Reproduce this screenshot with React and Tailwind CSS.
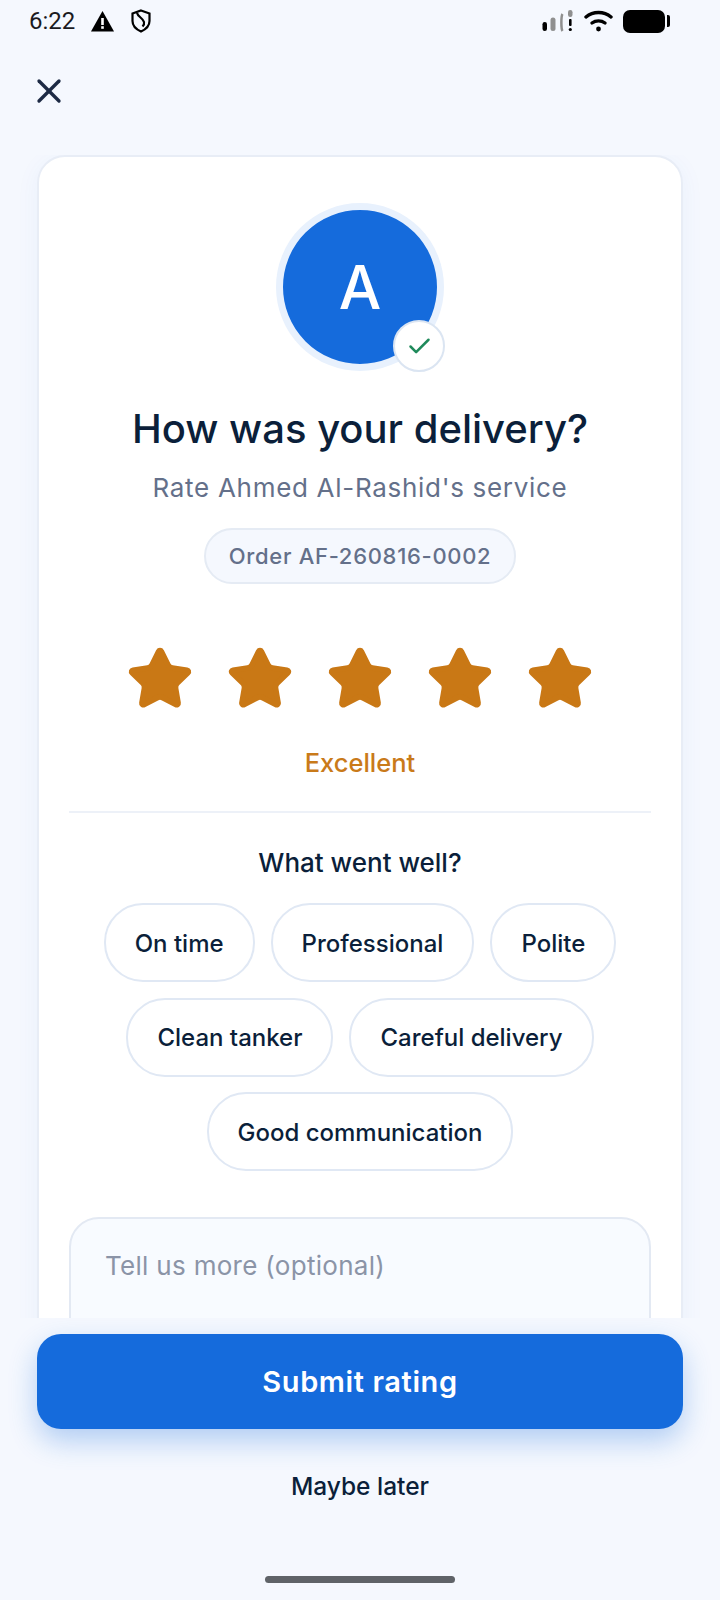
import { X, Check, Star } from 'lucide-react';

const chipRows = [
    ['On time', 'Professional', 'Polite'],
    ['Clean tanker', 'Careful delivery'],
    ['Good communication'],
];

function StatusBar() {
    return (
        <div className="flex h-[42px] items-center justify-between pl-[29px] pr-[50px]">
            <div className="flex items-center gap-[16px]">
                <span className="font-['Roboto',sans-serif] text-[24px] leading-none text-[#1b1b1f]">6:22</span>
                <svg width="23" height="21" viewBox="0 0 23 21">
                    <path d="M11.500 0L23 20.500H0z" fill="#000" />
                    <rect x="10.200" y="7" width="2.600" height="7" fill="#fff" />
                    <rect x="10.200" y="15.200" width="2.600" height="2.600" fill="#fff" />
                </svg>
                <svg className="ml-[1px]" width="20" height="24" viewBox="0 0 20 24" fill="none" stroke="#000" strokeWidth="2.200">
                    <path d="M10 1.500l8.500 3v7.500c0 5-3.600 8.300-8.500 10.500C5.100 20.300 1.500 17 1.500 12V4.500z" />
                    <path d="M6 4c1 4 6 5 7 9 .4 1.700-.5 3.500-1.500 4.500" />
                </svg>
            </div>
            <div className="flex items-center gap-[10px]">
                <svg className="mr-[1px]" width="31" height="24" viewBox="0 0 31 24">
                    <rect x="0.500" y="13" width="4.500" height="9" rx="2.200" fill="#000" />
                    <rect x="8.500" y="8.500" width="5" height="13.500" rx="2.500" fill="#8f8f8f" />
                    <path d="M20.500 5c-1.500 2-1.500 15 0 17" stroke="#8f8f8f" strokeWidth="2.500" fill="none" />
                    <rect x="26" y="1" width="4.500" height="7" rx="2.200" fill="#8f8f8f" />
                    <rect x="27" y="10" width="2.600" height="7" rx="1" fill="#000" />
                    <circle cx="28.300" cy="20.500" r="1.600" fill="#000" />
                </svg>
                <svg width="29" height="24" viewBox="0 0 29 24" fill="none" stroke="#000" strokeWidth="3.400" strokeLinecap="round">
                    <path d="M2 8C9 2 20 2 27 8" />
                    <path d="M8 14c3.800-2.800 9.200-2.800 13 0" />
                    <circle cx="14.500" cy="20" r="1.400" fill="#000" strokeWidth="2" />
                </svg>
                <div className="flex items-center gap-[2px]">
                    <div className="h-[23px] w-[42px] rounded-[7px] bg-black" />
                    <div className="h-[12px] w-[3px] rounded-r-[2px] bg-black" />
                </div>
            </div>
        </div>
    );
}

export default function App() {
    return (
        <div className="flex h-[1600px] w-[720px] flex-col overflow-hidden bg-[#f5f8fe] font-['Inter',sans-serif]">
            <StatusBar />
            <div className="flex h-[113px] shrink-0 items-start pl-[29px] pt-[29px]">
                <X size={40} strokeWidth={2} color="#1d2a44" />
            </div>

            <div className="relative min-h-0 flex-1 overflow-hidden px-[37px]">
                <div className="flex h-[1300px] flex-col items-center rounded-[28px] border-2 border-[#e8edf6] bg-white px-[30px] pt-[46px] shadow-[0_4px_24px_rgba(21,105,220,0.05)]">
                    <div className="relative h-[168px] w-[168px] rounded-full border-[7px] border-[#e8f1fd] bg-[#156bdc]">
                        <div className="flex h-full items-center justify-center text-[60px] leading-none font-medium text-white">A</div>
                        <div className="absolute right-[-8px] bottom-[-8px] flex h-[52px] w-[52px] items-center justify-center rounded-full border-2 border-[#dbe5f2] bg-white">
                            <Check size={27} strokeWidth={2.200} color="#1f8a5b" />
                        </div>
                    </div>
                    <h1 className="mt-[34px] text-[40px] leading-[48px] font-medium text-[#0b1f3a]">How was your delivery?</h1>
                    <p className="mt-[19px] text-[26px] leading-[32px] tracking-[0.7px] text-[#64708a]">Rate Ahmed Al-Rashid's service</p>
                    <div className="mt-[24px] flex h-[56px] items-center rounded-full border-2 border-[#e5ebf4] bg-[#f5f8fe] px-[23px] text-[22px] font-medium tracking-[0.7px] text-[#64708a]">
                        Order AF-260816-0002
                    </div>
                    <div className="mt-[61px] flex gap-[32px]">
                        <Star size={68} fill="#c97815" color="#c97815" />
                        <Star size={68} fill="#c97815" color="#c97815" />
                        <Star size={68} fill="#c97815" color="#c97815" />
                        <Star size={68} fill="#c97815" color="#c97815" />
                        <Star size={68} fill="#c97815" color="#c97815" />
                    </div>
                    <p className="mt-[34px] text-[25.500px] leading-[32px] font-medium text-[#c97a1a]">Excellent</p>
                    <div className="mt-[32px] h-[2px] w-full bg-[#edf1f8]" />
                    <p className="mt-[34px] text-[26px] leading-[32px] font-medium text-[#0b1f3a]">What went well?</p>
                    <div className="mt-[24px] flex flex-col items-center gap-[15.500px]">
                        {chipRows.map((row) => (
                            <div key={row[0]} className="flex gap-[16px]">
                                {row.map((label) => (
                                    <div key={label} className="flex h-[79px] items-center rounded-[39px] border-2 border-[#e0e8f4] bg-white px-[29px] pt-[2px] text-[24px] font-[450] text-[#0b1f3a]">
                                        {label}
                                    </div>
                                ))}
                            </div>
                        ))}
                    </div>
                    <div className="mt-[46px] h-[200px] w-full rounded-[30px] border-2 border-[#e3e9f3] bg-[#f8fbff] px-[34px] pt-[31px] text-[26px] leading-[32px] tracking-[0.3px] text-[#8b94a7]">
                        Tell us more (optional)
                    </div>
                </div>
            </div>

            <div className="flex h-[282px] shrink-0 flex-col items-center bg-[#f5f8fe] px-[37px] pt-[16px]">
                <div className="flex h-[95px] w-full items-center justify-center rounded-[24px] bg-[#156bdc] text-[29px] font-semibold tracking-[0.6px] text-white shadow-[0_12px_28px_rgba(21,107,220,0.3)]">
                    Submit rating
                </div>
                <p className="mt-[41px] text-[24.500px] leading-[32px] font-medium text-[#0b1f3a]">Maybe later</p>
                <div className="mt-[74px] h-[7px] w-[190px] rounded-full bg-[#5f6368]" />
            </div>
        </div>
    );
}
